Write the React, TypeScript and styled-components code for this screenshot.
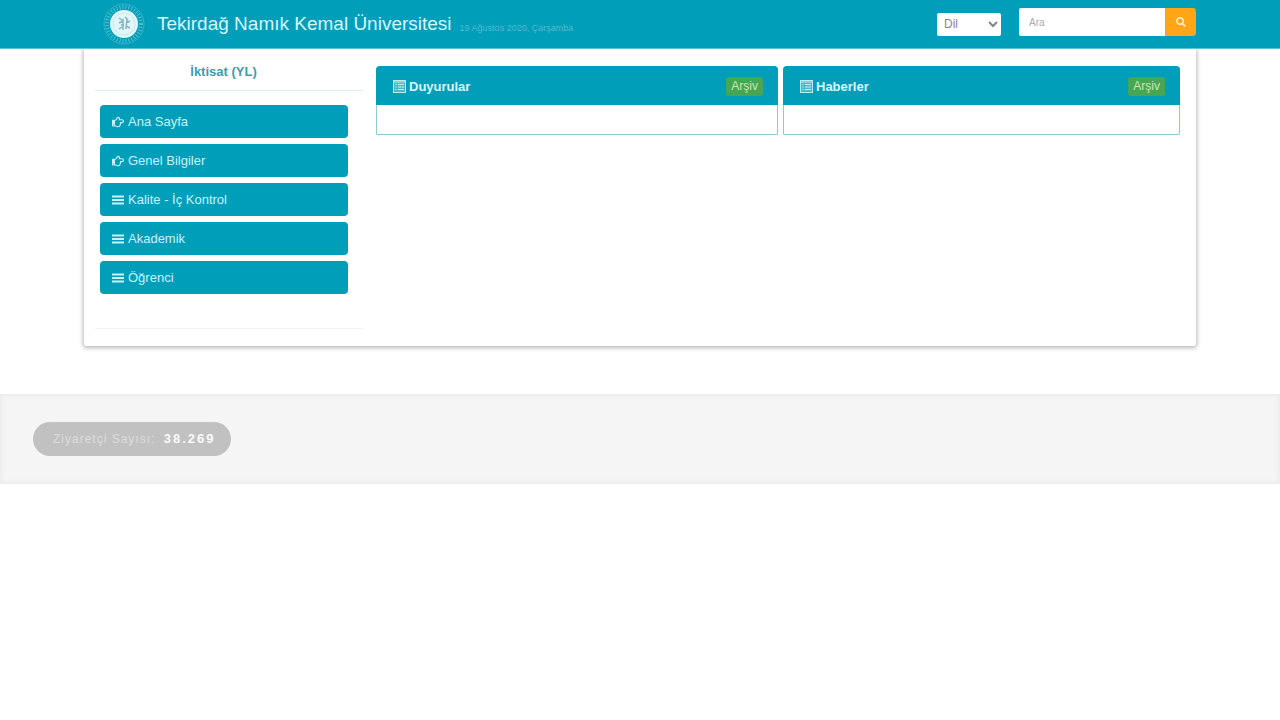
import React from "react";
import styled, { createGlobalStyle } from "styled-components";
import { FaRegHandPointRight, FaSearch } from "react-icons/fa";

const Global = createGlobalStyle`
  *, *::before, *::after { box-sizing: border-box; }
  body {
    margin: 0;
    background: #fff;
    color: #333;
    font: 13px/18px "Liberation Sans", Arial, sans-serif;
  }
  button, input, select { font-family: inherit; }
  a { text-decoration: none; }
`;

const Header = styled.header`
  background: #019eba;
  border-bottom: 1px solid #5cc4d6;
`;

const HeaderInner = styled.div`
  display: flex;
  align-items: center;
  height: 48px;
  padding: 0 84px 0 103px;
`;

const Brand = styled.a`
  display: flex;
  align-items: center;
  gap: 12px;
  color: #d5f6fb;
  font-size: 19px;
  line-height: 24px;
  white-space: nowrap;
`;

const DateText = styled.small`
  margin: 8px auto 0 8px;
  color: #4fbbcf;
  font-size: 9px;
  line-height: 12px;
  white-space: nowrap;
`;

const LanguageSelect = styled.select`
  width: 64px;
  height: 23px;
  margin: 0 18px 0 0;
  padding: 0 0 0 3px;
  border: 0;
  border-radius: 2px;
  background: #fff;
  color: #858585;
  font-size: 12px;
`;

const SearchForm = styled.form`
  display: flex;
  width: 177px;
  height: 28px;
  margin-bottom: 4px;
`;

const SearchInput = styled.input`
  flex: 1;
  min-width: 0;
  padding: 0 10px;
  border: 0;
  border-radius: 2px 0 0 2px;
  background: #fff;
  color: #555;
  font-size: 10px;
  &::placeholder { color: #aaa; opacity: 1; }
`;

const SearchButton = styled.button`
  display: grid;
  place-items: center;
  width: 31px;
  padding: 0;
  border: 0;
  border-radius: 0 3px 3px 0;
  background: #ffa516;
  color: #fff0d2;
  font-size: 10px;
`;

const Content = styled.main`
  display: flex;
  align-items: flex-start;
  min-height: 297px;
  margin: 0 84px;
  padding: 0 16px 16px 11px;
  border-radius: 0 0 3px 3px;
  box-shadow: 0 1px 4px 1px #b9b9b9;
  clip-path: inset(0 -10px -10px -10px);
`;

const Sidebar = styled.aside`
  flex: 0 0 269px;
  margin-right: 12px;
  border-bottom: 1px solid #f4f4f4;
`;

const UnitTitle = styled.h1`
  margin: 0;
  padding: 14px 12px 9px 0;
  border-bottom: 1px solid #dff0f3;
  color: #3a9eae;
  font-size: 13px;
  line-height: 18px;
  text-align: center;
`;

const Menu = styled.nav`
  display: flex;
  flex-direction: column;
  gap: 6px;
  padding: 14px 16px 34px 5px;
`;

const MenuLink = styled.a`
  display: flex;
  align-items: center;
  gap: 4px;
  height: 33px;
  padding: 0 12px;
  border-radius: 4px;
  background: #019eba;
  color: #c6f3f9;
  svg { width: 12px; height: 12px; }
`;

const Panels = styled.div`
  display: grid;
  grid-template-columns: 402fr 397fr;
  gap: 5px;
  flex: 1;
  padding-top: 17px;
`;

const PanelBox = styled.section`
  height: 69px;
  border: 1px solid #8ccbd5;
  border-radius: 4px 4px 1px 1px;
`;

const PanelHeader = styled.div`
  display: flex;
  align-items: center;
  gap: 3px;
  height: 39px;
  margin: -1px -1px 0;
  padding: 2px 15px 0 17px;
  border-radius: 4px 4px 0 0;
  background: #019eba;
  color: #d8f8fc;
`;

const PanelTitle = styled.h2`
  margin: 0 auto 0 0;
  font-size: 13px;
  line-height: 18px;
`;

const ArchiveLink = styled.a`
  padding: 0 5px;
  border-radius: 3px;
  background: #47a653;
  color: #c8e8b0;
  font-size: 12px;
  line-height: 19px;
`;

const Footer = styled.footer`
  margin-top: 48px;
  padding: 26px 31px;
  border: 2px solid #eeeeee;
  background: #f5f5f5;
  box-shadow: inset 0 0 4px #ededed;
`;

const Counter = styled.div`
  display: inline-block;
  padding: 0 16px 0 20px;
  border-radius: 17px;
  background: #c1c1c1;
  color: #dcdcdc;
  font-size: 12px;
  line-height: 34px;
  letter-spacing: 1px;
  vertical-align: top;
`;

const CounterValue = styled.strong`
  margin-left: 4px;
  color: #fafafa;
  font-size: 13px;
  letter-spacing: 2px;
`;

function Seal() {
  return (
    <svg width="42" height="42" viewBox="0 0 42 42" aria-hidden="true">
      <circle cx="21" cy="21" r="20" fill="none" stroke="#35b2c8" strokeWidth="1" />
      <circle cx="21" cy="21" r="17" fill="none" stroke="#58c0d1" strokeWidth="4" strokeDasharray="1 2" />
      <circle cx="21" cy="21" r="14" fill="#e0f6f9" />
      <circle cx="21" cy="21" r="11" fill="none" stroke="#cbeaee" strokeWidth="1" />
      <path d="M16 15l3 2M22 14l3 3M16 20l4-2M18 22h3M20 16v11M23 20l4-2M23 23l4 2M16 26l3-2M24 16l-1 10" fill="none" stroke="#82b5bd" strokeWidth="1.5" />
    </svg>
  );
}

function BarsIcon() {
  return (
    <svg viewBox="0 0 12 12" aria-hidden="true">
      <path d="M0 2.5h12M0 6h12M0 9.5h12" stroke="currentColor" strokeWidth="2.2" />
    </svg>
  );
}

function PanelIcon() {
  return (
    <svg width="13" height="13" viewBox="0 0 13 13" aria-hidden="true">
      <rect x=".5" y=".5" width="12" height="12" fill="#45b8cc" stroke="#b9edf4" />
      <path d="M1 2h11M5 4.5h6M5 7h6M5 9.5h6" stroke="#c4f0f5" />
      <path d="M2.5 4.5h1M2.5 7h1M2.5 9.5h1" stroke="#e0fafd" />
    </svg>
  );
}

function Panel({ title }: { title: string }) {
  return (
    <PanelBox>
      <PanelHeader>
        <PanelIcon />
        <PanelTitle>{title}</PanelTitle>
        <ArchiveLink href="#">Arşiv</ArchiveLink>
      </PanelHeader>
    </PanelBox>
  );
}

const menuItems = [
  { label: "Ana Sayfa", Icon: FaRegHandPointRight },
  { label: "Genel Bilgiler", Icon: FaRegHandPointRight },
  { label: "Kalite - İç Kontrol", Icon: BarsIcon },
  { label: "Akademik", Icon: BarsIcon },
  { label: "Öğrenci", Icon: BarsIcon },
];

export default function App() {
  return (
    <>
      <Global />
      <Header>
        <HeaderInner>
          <Brand href="#"><Seal />Tekirdağ Namık Kemal Üniversitesi</Brand>
          <DateText>19 Ağustos 2020, Çarşamba</DateText>
          <LanguageSelect aria-label="Dil" defaultValue="Dil">
            <option>Dil</option>
          </LanguageSelect>
          <SearchForm onSubmit={(e) => e.preventDefault()}>
            <SearchInput aria-label="Ara" placeholder="Ara" />
            <SearchButton aria-label="Ara"><FaSearch /></SearchButton>
          </SearchForm>
        </HeaderInner>
      </Header>
      <Content>
        <Sidebar>
          <UnitTitle>İktisat (YL)</UnitTitle>
          <Menu>
            {menuItems.map(({ label, Icon }) => (
              <MenuLink href="#" key={label}><Icon />{label}</MenuLink>
            ))}
          </Menu>
        </Sidebar>
        <Panels>
          <Panel title="Duyurular" />
          <Panel title="Haberler" />
        </Panels>
      </Content>
      <Footer>
        <Counter>Ziyaretçi Sayısı: <CounterValue>38.269</CounterValue></Counter>
      </Footer>
    </>
  );
}
